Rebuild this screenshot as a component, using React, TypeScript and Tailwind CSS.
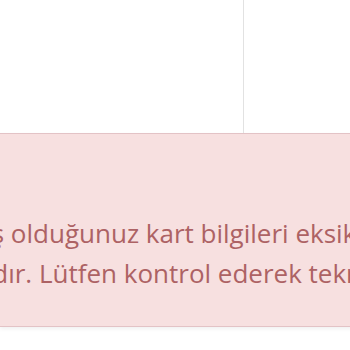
import React from "react";

const App = () => {
    return (
        <div className="w-[350px] h-[350px] overflow-hidden bg-white" style={{ fontFamily: '"Open Sans", sans-serif' }}>
            <div className="flex h-[133px]">
                <div className="w-[244px] border-r border-[#e2e2e2]"></div>
                <div className="flex-1"></div>
            </div>
            <div className="w-[420px] border-y border-[#e3c3c6] bg-[#f7e0e0] pt-[79px] pb-[33px] shadow-[0_2px_4px_rgba(0,0,0,0.06)]">
                <p className="ml-[-75px] whitespace-nowrap text-[26px] leading-[40px] text-[#ad6264]">
                    Girmiş olduğunuz kart bilgileri eksik veya
                    <br />
                    hatalıdır. Lütfen kontrol ederek tekrar deneyiniz.
                </p>
            </div>
        </div>
    );
};

export default App;
